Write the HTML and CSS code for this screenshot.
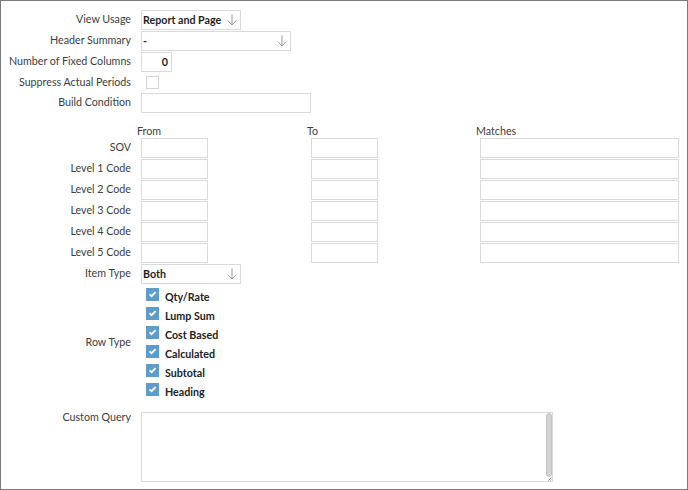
FILE: index.html
```html
<!DOCTYPE html>
<html>
<head>
<meta charset="utf-8">
<link rel="stylesheet" href="styles.css">
</head>
<body>
<div class="frame">
  <div class="form">
    <div class="label">View Usage</div>
    <div class="field">
      <div class="select w100"><span class="val">Report and Page</span><svg class="arrow" width="10" height="12" viewBox="0 0 10 12"><path d="M5 0.5V11M0.8 6.6L5 11L9.2 6.6" fill="none" stroke="#9a9a9a" stroke-width="1"/></svg></div>
    </div>

    <div class="label">Header Summary</div>
    <div class="field">
      <div class="select w150"><span class="val">-</span><svg class="arrow" width="10" height="12" viewBox="0 0 10 12"><path d="M5 0.5V11M0.8 6.6L5 11L9.2 6.6" fill="none" stroke="#9a9a9a" stroke-width="1"/></svg></div>
    </div>

    <div class="label">Number of Fixed Columns</div>
    <div class="field">
      <div class="input num">0</div>
    </div>

    <div class="label">Suppress Actual Periods</div>
    <div class="field short">
      <span class="cb"></span>
    </div>

    <div class="label">Build Condition</div>
    <div class="field">
      <div class="input w169"></div>
    </div>

    <div class="label"></div>
    <div class="range head">
      <div class="colhead">From</div>
      <div class="colhead">To</div>
      <div class="colhead">Matches</div>
    </div>

    <div class="label">SOV</div>
    <div class="range">
      <div class="input w67"></div><div class="input w67"></div><div class="input w199"></div>
    </div>
    <div class="label">Level 1 Code</div>
    <div class="range">
      <div class="input w67"></div><div class="input w67"></div><div class="input w199"></div>
    </div>
    <div class="label">Level 2 Code</div>
    <div class="range">
      <div class="input w67"></div><div class="input w67"></div><div class="input w199"></div>
    </div>
    <div class="label">Level 3 Code</div>
    <div class="range">
      <div class="input w67"></div><div class="input w67"></div><div class="input w199"></div>
    </div>
    <div class="label">Level 4 Code</div>
    <div class="range">
      <div class="input w67"></div><div class="input w67"></div><div class="input w199"></div>
    </div>
    <div class="label">Level 5 Code</div>
    <div class="range">
      <div class="input w67"></div><div class="input w67"></div><div class="input w199"></div>
    </div>

    <div class="label">Item Type</div>
    <div class="field">
      <div class="select w100"><span class="val">Both</span><svg class="arrow" width="10" height="12" viewBox="0 0 10 12"><path d="M5 0.5V11M0.8 6.6L5 11L9.2 6.6" fill="none" stroke="#9a9a9a" stroke-width="1"/></svg></div>
    </div>

    <div class="label mid">Row Type</div>
    <div class="checklist">
      <div class="check"><span class="cb on"><svg width="13" height="13" viewBox="0 0 13 13"><path d="M3.6 6.4L5.6 8.2L9.6 4.2" fill="none" stroke="#fff" stroke-width="1.8"/></svg></span><span class="ctext">Qty/Rate</span></div>
      <div class="check"><span class="cb on"><svg width="13" height="13" viewBox="0 0 13 13"><path d="M3.6 6.4L5.6 8.2L9.6 4.2" fill="none" stroke="#fff" stroke-width="1.8"/></svg></span><span class="ctext">Lump Sum</span></div>
      <div class="check"><span class="cb on"><svg width="13" height="13" viewBox="0 0 13 13"><path d="M3.6 6.4L5.6 8.2L9.6 4.2" fill="none" stroke="#fff" stroke-width="1.8"/></svg></span><span class="ctext">Cost Based</span></div>
      <div class="check"><span class="cb on"><svg width="13" height="13" viewBox="0 0 13 13"><path d="M3.6 6.4L5.6 8.2L9.6 4.2" fill="none" stroke="#fff" stroke-width="1.8"/></svg></span><span class="ctext">Calculated</span></div>
      <div class="check"><span class="cb on"><svg width="13" height="13" viewBox="0 0 13 13"><path d="M3.6 6.4L5.6 8.2L9.6 4.2" fill="none" stroke="#fff" stroke-width="1.8"/></svg></span><span class="ctext">Subtotal</span></div>
      <div class="check"><span class="cb on"><svg width="13" height="13" viewBox="0 0 13 13"><path d="M3.6 6.4L5.6 8.2L9.6 4.2" fill="none" stroke="#fff" stroke-width="1.8"/></svg></span><span class="ctext">Heading</span></div>
    </div>

    <div class="label top">Custom Query</div>
    <div class="field query">
      <div class="query-wrap">
        <textarea class="textarea"></textarea>
        <span class="scrollbar"></span>
        <svg class="grip" width="5" height="5" viewBox="0 0 5 5"><path d="M4.5 1.5L1.5 4.5M4.5 3.5L3.5 4.5" stroke="#777" stroke-width="0.8" fill="none"/></svg>
      </div>
    </div>
  </div>
</div>
</body>
</html>
```

FILE: styles.css
```css
html, body {
  margin: 0;
  padding: 0;
  background: #fff;
}

body {
  font-family: Lato, "Open Sans", "Liberation Sans", sans-serif;
  font-size: 10.7px;
  color: #3d3d3d;
}

.frame {
  box-sizing: border-box;
  width: 688px;
  height: 490px;
  border: 1px solid #7b7b7b;
  padding-top: 9px;
}

.form {
  display: grid;
  grid-template-columns: 130px 1fr;
  column-gap: 10px;
  row-gap: 1px;
  align-items: start;
}

.label {
  text-align: right;
  line-height: 13px;
  padding-top: 2px;
  white-space: nowrap;
}

.label.mid {
  align-self: center;
  padding-top: 0;
  padding-bottom: 3px;
}

.label.top {
  margin-top: 9px;
  padding-top: 0;
}

.field {
  height: 20px;
  display: flex;
  align-items: center;
}

.field.short {
  height: 19px;
}

.select,
.input {
  box-sizing: border-box;
  height: 20px;
  border: 1px solid #dadada;
  background: #fff;
}

.select {
  display: flex;
  align-items: center;
  justify-content: space-between;
  padding: 0 3px 0 1px;
}

.select .val {
  font-weight: bold;
  color: #1f1f1f;
  line-height: 16px;
}

.arrow {
  display: block;
  flex: none;
}

.w100 { width: 100px; }
.w150 { width: 150px; }
.w169 { width: 170px; }
.w67 { width: 67px; }
.w199 { width: 199px; }

.input.num {
  width: 31px;
  text-align: right;
  padding-right: 3px;
  font-weight: bold;
  color: #1f1f1f;
  line-height: 18px;
}

.cb {
  box-sizing: border-box;
  display: block;
  width: 13px;
  height: 13px;
  border: 1px solid #d4d4d4;
  background: #fff;
  margin-left: 5px;
  flex: none;
}

.cb.on {
  border: none;
  background: #5e9dcb;
  margin-top: 2px;
}

.cb.on svg {
  display: block;
}

.range {
  display: grid;
  grid-template-columns: 170px 169px auto;
  height: 20px;
}

.range.head {
  height: auto;
  padding-top: 10px;
}

.colhead {
  margin-left: -4px;
  line-height: 13px;
}

.checklist {
  display: flex;
  flex-direction: column;
  margin-top: 1px;
}

.check {
  display: flex;
  align-items: flex-start;
  height: 19px;
}

.ctext {
  font-weight: bold;
  color: #222;
  line-height: 19px;
  padding-top: 1px;
  margin-left: 6px;
}

.field.query {
  height: auto;
  margin-top: 11px;
}

.query-wrap {
  position: relative;
  width: 412px;
  height: 70px;
}

.textarea {
  box-sizing: border-box;
  display: block;
  width: 412px;
  height: 70px;
  margin: 0;
  padding: 2px 8px 2px 2px;
  border: 1px solid #dadada;
  font-family: inherit;
  font-size: 11px;
  resize: none;
  outline: none;
}

.scrollbar {
  position: absolute;
  right: 1px;
  top: 1px;
  bottom: 5px;
  width: 4px;
  background: #d4d4d4;
  border: 1px solid #c2c2c2;
  border-radius: 3px;
}

.grip {
  position: absolute;
  right: 1px;
  bottom: 1px;
  display: block;
}
```
